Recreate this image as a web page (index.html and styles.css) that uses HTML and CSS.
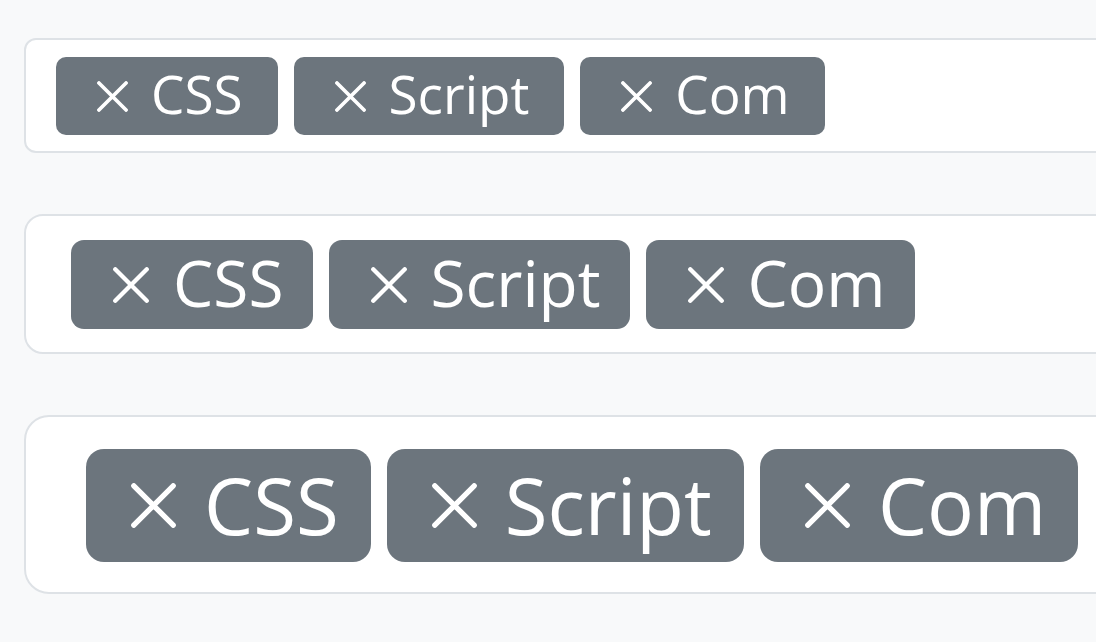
FILE: index.html
```html
<!DOCTYPE html>
<html lang="en">
<head>
    <meta charset="UTF-8">
    <meta name="viewport" content="width=device-width, initial-scale=1.0">
    <title>Tags input sizes</title>
    <link rel="stylesheet" href="styles.css">
</head>
<body>
    <div class="page">
        <!-- small -->
        <div class="tags-input tags-sm">
            <span class="tag"><button class="tag-remove" type="button" aria-label="Remove"><svg viewBox="0 0 32 32"><path d="M2 2L30 30M30 2L2 30"/></svg></button><span class="tag-label">CSS</span></span>
            <span class="tag"><button class="tag-remove" type="button" aria-label="Remove"><svg viewBox="0 0 32 32"><path d="M2 2L30 30M30 2L2 30"/></svg></button><span class="tag-label">Script</span></span>
            <span class="tag"><button class="tag-remove" type="button" aria-label="Remove"><svg viewBox="0 0 32 32"><path d="M2 2L30 30M30 2L2 30"/></svg></button><span class="tag-label">Com</span></span>
        </div>

        <!-- default -->
        <div class="tags-input">
            <span class="tag"><button class="tag-remove" type="button" aria-label="Remove"><svg viewBox="0 0 32 32"><path d="M2 2L30 30M30 2L2 30"/></svg></button><span class="tag-label">CSS</span></span>
            <span class="tag"><button class="tag-remove" type="button" aria-label="Remove"><svg viewBox="0 0 32 32"><path d="M2 2L30 30M30 2L2 30"/></svg></button><span class="tag-label">Script</span></span>
            <span class="tag"><button class="tag-remove" type="button" aria-label="Remove"><svg viewBox="0 0 32 32"><path d="M2 2L30 30M30 2L2 30"/></svg></button><span class="tag-label">Com</span></span>
        </div>

        <!-- large -->
        <div class="tags-input tags-lg">
            <span class="tag"><button class="tag-remove" type="button" aria-label="Remove"><svg viewBox="0 0 32 32"><path d="M2 2L30 30M30 2L2 30"/></svg></button><span class="tag-label">CSS</span></span>
            <span class="tag"><button class="tag-remove" type="button" aria-label="Remove"><svg viewBox="0 0 32 32"><path d="M2 2L30 30M30 2L2 30"/></svg></button><span class="tag-label">Script</span></span>
            <span class="tag"><button class="tag-remove" type="button" aria-label="Remove"><svg viewBox="0 0 32 32"><path d="M2 2L30 30M30 2L2 30"/></svg></button><span class="tag-label">Com</span></span>
        </div>
    </div>
</body>
</html>
```

FILE: styles.css
```css
html, body {
    margin: 0;
    padding: 0;
    overflow: hidden;
}
body {
    font-family: "Open Sans", "Noto Sans", sans-serif;
    background-color: #f8f9fa;
    color: #212529;
}
.page {
    width: 1200px;
    padding: 38px 0 0 24px;
    display: flex;
    flex-direction: column;
    gap: 61px;
}
.tags-input {
    display: flex;
    align-items: center;
    gap: 16px;
    background-color: #fff;
    border: 2px solid #dee2e6;
    border-radius: 19px;
    padding: 24px 0 23px 45px;
}
.tag {
    display: inline-flex;
    align-items: center;
    height: 89px;
    padding: 0 29px 0 42px;
    background-color: #6c757d;
    color: #fff;
    border-radius: 13px;
    font-size: 64px;
    box-sizing: border-box;
}
.tag-remove {
    display: flex;
    padding: 0;
    margin: 0;
    border: none;
    background: none;
    cursor: pointer;
    width: 36px;
    height: 36px;
}
.tag-remove svg {
    width: 100%;
    height: 100%;
}
.tag-remove svg path {
    fill: none;
    stroke: #fff;
    stroke-width: 3.8;
    stroke-linecap: round;
}
.tag-label {
    line-height: 1;
    margin-left: 24px;
    padding-bottom: 3px;
}

/* small */
.tags-sm {
    border-radius: 12px;
    padding: 17px 0 16px 30px;
}
.tags-sm .tag {
    height: 78px;
    padding: 0 35px 0 41px;
    border-radius: 10px;
    font-size: 53px;
}
.tags-sm .tag-remove {
    width: 31px;
    height: 31px;
}
.tags-sm .tag-label {
    margin-left: 23px;
    padding-bottom: 5px;
}

/* large */
.tags-lg {
    border-radius: 25px;
    padding: 32px 0 30px 60px;
}
.tags-lg .tag {
    height: 113px;
    padding: 0 32px 0 45px;
    border-radius: 18px;
    font-size: 78px;
}
.tags-lg .tag-remove {
    width: 45px;
    height: 45px;
}
.tags-lg .tag-label {
    margin-left: 28px;
    padding-bottom: 1px;
}
```
